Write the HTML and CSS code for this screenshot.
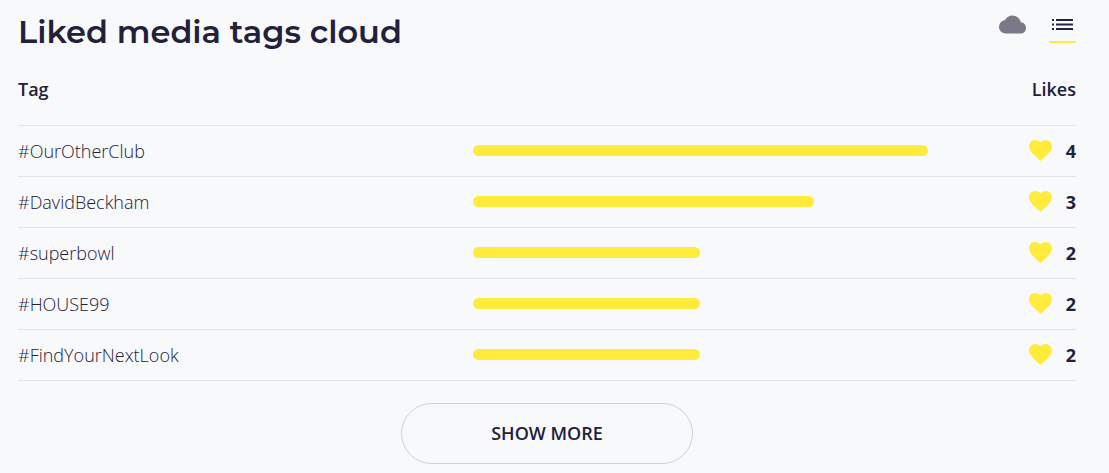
FILE: index.html
```html
<!DOCTYPE html>
<html lang="en">
<head>
  <meta charset="UTF-8">
  <meta name="viewport" content="width=device-width, initial-scale=1.0">
  <title>Liked media tags cloud</title>
  <link rel="stylesheet" href="styles.css">
</head>
<body>

  <section class="tags">
    <div class="tags-header">
      <h2>Liked media tags cloud</h2>
      <div class="view-switch">
        <button type="button" class="view-btn" aria-label="Cloud view">
          <svg width="27" height="27" viewBox="0 0 24 24"><path d="M19.35 10.04A7.49 7.49 0 0 0 12 4C9.11 4 6.6 5.64 5.35 8.04A5.994 5.994 0 0 0 0 14c0 3.31 2.69 6 6 6h13c2.76 0 5-2.24 5-5 0-2.64-2.05-4.78-4.65-4.96z"/></svg>
        </button>
        <button type="button" class="view-btn active" aria-label="List view" aria-pressed="true">
          <svg width="27" height="27" viewBox="0 0 27 27"><path d="M3 8h2v2H3zM3 17h2v2H3zM7 8h17v2H7zM7 17h17v2H7z"/><path d="M3 12h2v3H3zM7 12h17v3H7z" opacity=".5"/><path d="M3 13h2v1H3zM7 13h17v1H7z"/></svg>
        </button>
      </div>
    </div>

    <!-- Tags list -->
    <table class="tags-table">
      <thead>
        <tr>
          <th class="col-tag">Tag</th>
          <td class="col-bar"></td>
          <th class="col-likes">Likes</th>
        </tr>
      </thead>
      <tbody>
        <tr>
          <td>#OurOtherClub</td>
          <td><div class="bar" style="width: 100%"></div></td>
          <td><div class="likes"><svg class="heart" viewBox="2 3 20 18.35"><path d="M12 21.35l-1.45-1.32C5.4 15.36 2 12.28 2 8.5 2 5.42 4.42 3 7.5 3c1.74 0 3.41.81 4.5 2.09C13.09 3.81 14.76 3 16.5 3 19.58 3 22 5.42 22 8.5c0 3.78-3.4 6.86-8.55 11.54L12 21.35z"/></svg>4</div></td>
        </tr>
        <tr>
          <td>#DavidBeckham</td>
          <td><div class="bar" style="width: 75%"></div></td>
          <td><div class="likes"><svg class="heart" viewBox="2 3 20 18.35"><path d="M12 21.35l-1.45-1.32C5.4 15.36 2 12.28 2 8.5 2 5.42 4.42 3 7.5 3c1.74 0 3.41.81 4.5 2.09C13.09 3.81 14.76 3 16.5 3 19.58 3 22 5.42 22 8.5c0 3.78-3.4 6.86-8.55 11.54L12 21.35z"/></svg>3</div></td>
        </tr>
        <tr>
          <td>#superbowl</td>
          <td><div class="bar" style="width: 50%"></div></td>
          <td><div class="likes"><svg class="heart" viewBox="2 3 20 18.35"><path d="M12 21.35l-1.45-1.32C5.4 15.36 2 12.28 2 8.5 2 5.42 4.42 3 7.5 3c1.74 0 3.41.81 4.5 2.09C13.09 3.81 14.76 3 16.5 3 19.58 3 22 5.42 22 8.5c0 3.78-3.4 6.86-8.55 11.54L12 21.35z"/></svg>2</div></td>
        </tr>
        <tr>
          <td>#HOUSE99</td>
          <td><div class="bar" style="width: 50%"></div></td>
          <td><div class="likes"><svg class="heart" viewBox="2 3 20 18.35"><path d="M12 21.35l-1.45-1.32C5.4 15.36 2 12.28 2 8.5 2 5.42 4.42 3 7.5 3c1.74 0 3.41.81 4.5 2.09C13.09 3.81 14.76 3 16.5 3 19.58 3 22 5.42 22 8.5c0 3.78-3.4 6.86-8.55 11.54L12 21.35z"/></svg>2</div></td>
        </tr>
        <tr>
          <td>#FindYourNextLook</td>
          <td><div class="bar" style="width: 50%"></div></td>
          <td><div class="likes"><svg class="heart" viewBox="2 3 20 18.35"><path d="M12 21.35l-1.45-1.32C5.4 15.36 2 12.28 2 8.5 2 5.42 4.42 3 7.5 3c1.74 0 3.41.81 4.5 2.09C13.09 3.81 14.76 3 16.5 3 19.58 3 22 5.42 22 8.5c0 3.78-3.4 6.86-8.55 11.54L12 21.35z"/></svg>2</div></td>
        </tr>
      </tbody>
    </table>

    <button type="button" class="more-btn">SHOW MORE</button>
  </section>

</body>
</html>
```
FILE: styles.css
```css
* {
  box-sizing: border-box;
}

body {
  margin: 0;
  font-family: 'Open Sans', sans-serif;
  font-size: 18px;
  line-height: 24px;
  color: #22203a;
  background: #f8f9fb;
}

.tags {
  padding: 11px 33px 8px 18px;
}

.tags-header {
  display: flex;
  justify-content: space-between;
  align-items: flex-start;
}

.tags-header h2 {
  margin: 0;
  font-family: 'Montserrat', 'Inter', sans-serif;
  font-size: 32px;
  line-height: 42px;
  font-weight: 600;
}

.view-switch {
  display: flex;
  gap: 23px;
}

.view-btn {
  padding: 0 0 3px;
  border: none;
  border-bottom: 2px solid transparent;
  background: none;
  cursor: pointer;
}

.view-btn svg {
  display: block;
  fill: #7b7987;
}

.view-btn.active {
  border-bottom-color: #ffeb3b;
}

.view-btn.active svg {
  fill: #22203a;
}

.tags-table {
  width: 100%;
  table-layout: fixed;
  border-collapse: collapse;
}

.tags-table th,
.tags-table td {
  padding: 0;
}

.tags-table th {
  height: 72px;
  font-weight: 600;
  text-align: left;
}

.col-tag,
.col-bar {
  width: 43%;
}

.tags-table .col-likes {
  text-align: right;
}

.tags-table tbody td {
  height: 51px;
  border-top: 1px solid #e1e2e5;
  border-bottom: 1px solid #e1e2e5;
  font-weight: 300;
}

.bar {
  height: 11px;
  border-radius: 6px;
  background: #ffeb3b;
}

.likes {
  display: flex;
  justify-content: flex-end;
  align-items: center;
  gap: 14px;
  font-weight: 700;
}

.heart {
  width: 23px;
  height: 21px;
  fill: #ffeb3b;
}

.more-btn {
  display: block;
  width: 292px;
  height: 61px;
  margin: 22px auto 0;
  border: 1px solid #cfd0d3;
  border-radius: 31px;
  background: none;
  color: inherit;
  font-family: inherit;
  font-size: 18px;
  font-weight: 600;
  cursor: pointer;
}

.more-btn:hover {
  border-color: #22203a;
}
```
